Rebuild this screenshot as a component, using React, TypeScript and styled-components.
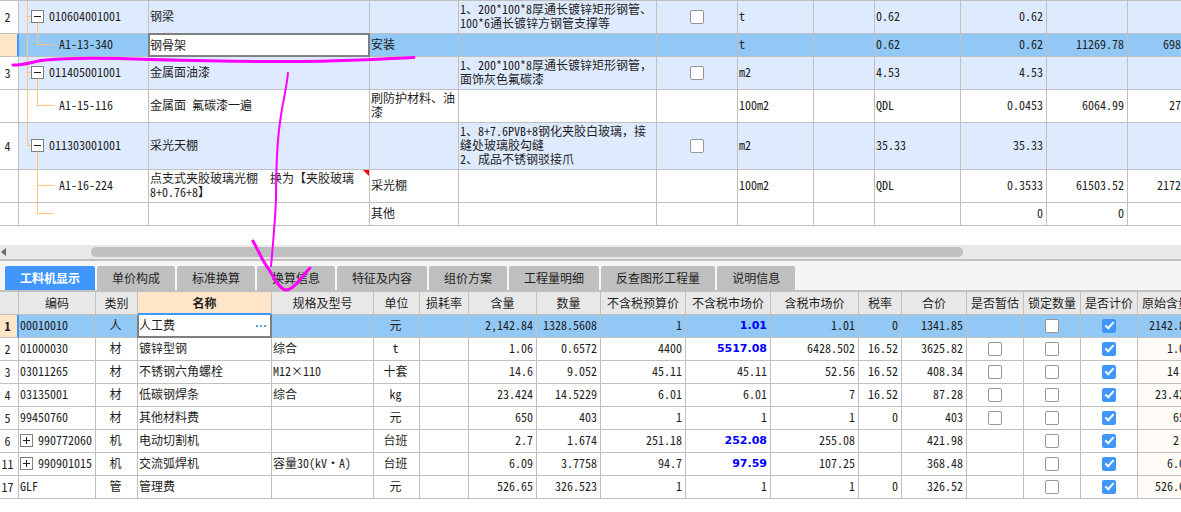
import React from 'react';
import styled, { createGlobalStyle, css } from 'styled-components';

const color = {
  line: '#c0c0c0',
  text: '#1e1e1e',
  blue: '#3f97fe',
  rowSelected: '#92c8f6',
  rowItem: '#deeafe',
  head: '#e8e8e8',
  peach: '#ffe6c8',
  guide: '#ffc480',
  editor: '#808080',
  ink: '#ff00ff',
};

const GlobalStyle = createGlobalStyle`
  *, *::before, *::after { box-sizing: border-box; }
  body {
    margin: 0;
    background: #fff;
    color: ${color.text};
    font-family: "Noto Sans CJK SC", sans-serif;
    font-size: 12px;
    line-height: 14px;
    font-feature-settings: "hwid" 1;
  }
  button, input { font: inherit; color: inherit; font-feature-settings: inherit; }
`;

const Page = styled.main`
  position: relative;
  overflow: hidden;
  min-height: 100vh;
`;

const GridPane = styled.section`
  overflow: hidden;
`;

const QuotaPane = styled(GridPane)`
  border-top: 1px solid ${color.line};
  padding-bottom: 19px;
`;

const Grid = styled.table`
  table-layout: fixed;
  width: 0;
  border-collapse: separate;
  border-spacing: 0;
`;

const Col = styled.col<{ $w: number }>`
  width: ${(p) => p.$w}px;
`;

type Align = 'left' | 'center' | 'right';

const Cell = styled.td<{ $align?: Align; $tint?: boolean }>`
  position: relative;
  padding: 0 3px 2px 1px;
  border-right: 1px solid ${color.line};
  border-bottom: 1px solid ${color.line};
  text-align: ${(p) => p.$align ?? 'left'};
  vertical-align: middle;
  ${(p) => p.$tint && css`background: #fffbf6;`}
`;

const CheckCell = styled(Cell)`
  padding: 0 0 2px;
`;

const Line = styled.div`
  white-space: nowrap;
`;

const FullWidth = styled.span`
  font-feature-settings: normal;
`;

const NumberCell = styled.th<{ $current?: boolean }>`
  padding: 0 3px 0 0;
  border-right: 1px solid ${color.line};
  border-bottom: 1px solid ${color.line};
  background: #fff;
  font-weight: 400;
  text-align: center;
  ${(p) =>
    p.$current &&
    css`
      padding-right: 2px;
      border-right: 2px solid ${color.blue};
      background: ${color.peach};
      font-weight: 700;
    `}
`;

const HeadCell = styled.th<{ $active?: boolean }>`
  height: 23px;
  padding: 0;
  border-right: 1px solid ${color.line};
  border-bottom: 1px solid ${color.line};
  background: ${color.head};
  font-weight: 400;
  text-align: center;
  white-space: nowrap;
  ${(p) =>
    p.$active &&
    css`
      border-bottom: 2px solid ${color.blue};
      background: ${color.peach};
      font-weight: 700;
    `}
`;

type RowKind = 'item' | 'selected' | 'plain';

const Row = styled.tr<{ $kind: RowKind; $h: number }>`
  height: ${(p) => p.$h}px;
  background: ${(p) =>
    p.$kind === 'item' ? color.rowItem : p.$kind === 'selected' ? color.rowSelected : '#fff'};
`;

type Guide = 'item' | 'itemEnd' | 'child' | 'lastGroupChild' | 'last';

const g = `linear-gradient(${color.guide}, ${color.guide}) no-repeat`;
const mid = 'calc(50% - 1px)';
const guides: Record<Guide, string> = {
  item: `${g} 8px 0 / 1px 100%, ${g} 8px ${mid} / 5px 1px, ${g} 18px 100% / 1px 50%`,
  itemEnd: `${g} 8px 0 / 1px 50%, ${g} 8px ${mid} / 5px 1px, ${g} 18px 100% / 1px 50%`,
  child: `${g} 8px 0 / 1px 100%, ${g} 18px 0 / 1px 50%, ${g} 18px ${mid} / 17px 1px`,
  lastGroupChild: `${g} 18px 0 / 1px 100%, ${g} 18px ${mid} / 17px 1px`,
  last: `${g} 18px 0 / 1px 50%, ${g} 18px ${mid} / 17px 1px`,
};

const TreeCell = styled(Cell)<{ $guide: Guide }>`
  padding-left: ${(p) => (p.$guide.startsWith('item') ? 12 : 40)}px;
  background: ${(p) => guides[p.$guide]};
`;

const Code = styled.div`
  display: flex;
  align-items: center;
  gap: 5px;
`;

const Toggle = styled.button`
  display: flex;
  align-items: center;
  justify-content: center;
  flex: none;
  width: 13px;
  height: 13px;
  padding: 0;
  border: 1px solid #808080;
  background: #fff;
`;

const Tick = styled.input`
  appearance: none;
  display: block;
  width: 14px;
  height: 14px;
  margin: 1px auto 0;
  border: 1px solid #969696;
  border-radius: 2px;
  background: #fff;
  &:checked {
    border-color: ${color.blue};
    background: ${color.blue};
  }
  &:checked::before {
    content: '';
    display: block;
    width: 5px;
    height: 9px;
    margin: 0 0 0 4px;
    border: solid #fff;
    border-width: 0 2px 2px 0;
    transform: rotate(42deg);
  }
`;

const Editor = styled.div<{ $underHead?: boolean }>`
  position: absolute;
  inset: ${(p) => (p.$underHead ? '0 -1px -1px' : '-1px')};
  display: flex;
  align-items: center;
  border: 2px solid ${color.editor};
  ${(p) => p.$underHead && css`border-top: 0;`}
  background: #fff;
`;

const EditorInput = styled.input`
  flex: 1;
  min-width: 0;
  height: 100%;
  padding: 0 0 2px;
  border: 0;
  outline: 0;
  background: transparent;
`;

const MoreButton = styled.button`
  display: flex;
  align-items: center;
  height: 100%;
  padding: 0 3px;
  border: 0;
  background: transparent;
`;

const Flag = styled.span`
  position: absolute;
  top: 0;
  right: 0;
  border: 3px solid transparent;
  border-top-color: #f00;
  border-right-color: #f00;
`;

const Price = styled.b`
  color: #0000ff;
  font: 700 11px/14px "DejaVu Sans", sans-serif;
`;

const ScrollBar = styled.div`
  display: flex;
  align-items: center;
  height: 14px;
  background: ${color.head};
`;

const ScrollArrow = styled.button`
  display: flex;
  align-items: center;
  width: 8px;
  height: 14px;
  padding: 0 0 0 1px;
  border: 0;
  background: transparent;
`;

const ScrollTrack = styled.div`
  flex: 1;
  padding-left: 7%;
`;

const ScrollThumb = styled.div`
  width: 80%;
  height: 10px;
  border-radius: 5px;
  background: #bfbfbf;
`;

const TabBar = styled.nav`
  display: flex;
  gap: 2px;
  padding: 5px 5px 0;
  border-top: 2px solid ${color.line};
  border-bottom: 2px solid ${color.line};
  background: #f5f5f5;
`;

const Tab = styled.button<{ $active?: boolean }>`
  height: 24px;
  padding: 0 15px;
  border: 0;
  border-radius: 2px 2px 0 0;
  white-space: nowrap;
  background: ${(p) => (p.$active ? color.blue : '#bfbfbf')};
  color: ${(p) => (p.$active ? '#fff' : color.text)};
  font-weight: ${(p) => (p.$active ? 700 : 400)};
`;

const Ink = styled.svg`
  position: absolute;
  top: 0;
  left: 0;
  pointer-events: none;
`;

/* One block per line; full-width commas and spaces keep a whole character cell. */
const Lines = ({ text = '' }: { text?: string }) => (
  <>
    {text.split('\n').map((line, n) => (
      <Line key={n}>
        {line.split(/([，　])/).map((part, i) => (i % 2 ? <FullWidth key={i}>{part}</FullWidth> : part))}
      </Line>
    ))}
  </>
);

const Sign = ({ plus }: { plus?: boolean }) => (
  <svg width="7" height="7" viewBox="0 0 7 7" shapeRendering="crispEdges" aria-hidden="true">
    <path d={plus ? 'M0 3h7v1H0zM3 0h1v7H3z' : 'M0 3h7v1H0z'} fill="#1e1e1e" />
  </svg>
);

const quotaCols = [19, 130, 221, 89, 198, 81, 76, 61, 86, 86, 81, 81];

interface QuotaRow {
  no?: string;
  kind: RowKind;
  h: number;
  guide: Guide;
  code: string;
  name: string;
  type?: string;
  feature?: string;
  check?: boolean;
  unit?: string;
  expr?: string;
  qty?: string;
  price?: string;
  total?: string;
  flag?: boolean;
}

const quotaRows: QuotaRow[] = [
  { no: '2', kind: 'item', h: 33, guide: 'item', code: '010604001001', name: '钢梁', feature: '1、200*100*8厚通长镀锌矩形钢管、\n100*6通长镀锌方钢管支撑等', check: true, unit: 't', expr: '0.62', qty: '0.62' },
  { kind: 'selected', h: 23, guide: 'child', code: 'A1-13-340', name: '钢骨架', type: '安装', unit: 't', expr: '0.62', qty: '0.62', price: '11269.78', total: '6987.26' },
  { no: '3', kind: 'item', h: 33, guide: 'item', code: '011405001001', name: '金属面油漆', feature: '1、200*100*8厚通长镀锌矩形钢管，\n面饰灰色氟碳漆', check: true, unit: 'm2', expr: '4.53', qty: '4.53' },
  { kind: 'plain', h: 33, guide: 'child', code: 'A1-15-116', name: '金属面 氟碳漆一遍', type: '刷防护材料、油漆', unit: '100m2', expr: 'QDL', qty: '0.0453', price: '6064.99', total: '274.74' },
  { no: '4', kind: 'item', h: 47, guide: 'itemEnd', code: '011303001001', name: '采光天棚', feature: '1、8+7.6PVB+8钢化夹胶白玻璃，接\n缝处玻璃胶勾缝\n2、成品不锈钢驳接爪', check: true, unit: 'm2', expr: '35.33', qty: '35.33' },
  { kind: 'plain', h: 33, guide: 'lastGroupChild', code: 'A1-16-224', name: '点支式夹胶玻璃光棚　换为【夹胶玻璃\n8+0.76+8】', type: '采光棚', unit: '100m2', expr: 'QDL', qty: '0.3533', price: '61503.52', total: '21729.19', flag: true },
  { kind: 'plain', h: 23, guide: 'last', code: '', name: '', type: '其他', qty: '0', price: '0', total: '0' },
];

const QuotaGrid = () => (
  <Grid aria-label="定额">
    <colgroup>{quotaCols.map((w, i) => <Col key={i} $w={w} />)}</colgroup>
    <tbody>
      {quotaRows.map((r, i) => (
        <Row key={i} $kind={r.kind} $h={r.h}>
          <NumberCell scope="row" $current={r.kind === 'selected'}>{r.no}</NumberCell>
          <TreeCell $guide={r.guide}>
            <Code>
              {r.kind === 'item' && <Toggle aria-label={`折叠 ${r.code}`}><Sign /></Toggle>}
              {r.code}
            </Code>
          </TreeCell>
          <Cell>
            {r.kind === 'selected' ? (
              <Editor><EditorInput aria-label="名称" defaultValue={r.name} /></Editor>
            ) : <Lines text={r.name} />}
            {r.flag && <Flag />}
          </Cell>
          <Cell>{r.type}</Cell>
          <Cell><Lines text={r.feature} /></Cell>
          <CheckCell>{r.check && <Tick type="checkbox" aria-label={`选择 ${r.code}`} />}</CheckCell>
          <Cell>{r.unit}</Cell>
          <Cell />
          <Cell>{r.expr}</Cell>
          <Cell $align="right">{r.qty}</Cell>
          <Cell $align="right">{r.price}</Cell>
          <Cell $align="right">{r.total}</Cell>
        </Row>
      ))}
    </tbody>
  </Grid>
);

const tabs = ['工料机显示', '单价构成', '标准换算', '换算信息', '特征及内容', '组价方案', '工程量明细', '反查图形工程量', '说明信息'];

const resourceCols: [string, number][] = [
  ['', 19], ['编码', 77], ['类别', 42], ['名称', 134], ['规格及型号', 102], ['单位', 46],
  ['损耗率', 49], ['含量', 68], ['数量', 64], ['不含税预算价', 85], ['不含税市场价', 85],
  ['含税市场价', 88], ['税率', 43], ['合价', 65], ['是否暂估', 57], ['锁定数量', 57],
  ['是否计价', 57], ['原始含量', 57],
];

interface Resource {
  no: string;
  code: string;
  kind: string;
  name: string;
  spec?: string;
  unit: string;
  content: string;
  qty: string;
  budget: string;
  market: string;
  changed?: boolean;
  taxed: string;
  rate?: string;
  total: string;
  estimate?: boolean;
  group?: boolean;
  original: string;
}

const resources: Resource[] = [
  { no: '1', code: '00010010', kind: '人', name: '人工费', unit: '元', content: '2,142.84', qty: '1328.5608', budget: '1', market: '1.01', changed: true, taxed: '1.01', rate: '0', total: '1341.85', original: '2142.84' },
  { no: '2', code: '01000030', kind: '材', name: '镀锌型钢', spec: '综合', unit: 't', content: '1.06', qty: '0.6572', budget: '4400', market: '5517.08', changed: true, taxed: '6428.502', rate: '16.52', total: '3625.82', estimate: true, original: '1.06' },
  { no: '3', code: '03011265', kind: '材', name: '不锈钢六角螺栓', spec: 'M12×110', unit: '十套', content: '14.6', qty: '9.052', budget: '45.11', market: '45.11', taxed: '52.56', rate: '16.52', total: '408.34', estimate: true, original: '14.6' },
  { no: '4', code: '03135001', kind: '材', name: '低碳钢焊条', spec: '综合', unit: 'kg', content: '23.424', qty: '14.5229', budget: '6.01', market: '6.01', taxed: '7', rate: '16.52', total: '87.28', estimate: true, original: '23.424' },
  { no: '5', code: '99450760', kind: '材', name: '其他材料费', unit: '元', content: '650', qty: '403', budget: '1', market: '1', taxed: '1', rate: '0', total: '403', estimate: true, original: '650' },
  { no: '6', code: '990772060', kind: '机', name: '电动切割机', unit: '台班', content: '2.7', qty: '1.674', budget: '251.18', market: '252.08', changed: true, taxed: '255.08', total: '421.98', group: true, original: '2.7' },
  { no: '11', code: '990901015', kind: '机', name: '交流弧焊机', spec: '容量30(kV·A)', unit: '台班', content: '6.09', qty: '3.7758', budget: '94.7', market: '97.59', changed: true, taxed: '107.25', total: '368.48', group: true, original: '6.09' },
  { no: '17', code: 'GLF', kind: '管', name: '管理费', unit: '元', content: '526.65', qty: '326.523', budget: '1', market: '1', taxed: '1', rate: '0', total: '326.52', original: '526.65' },
];

const ResourceGrid = () => (
  <Grid aria-label="工料机显示">
    <colgroup>{resourceCols.map(([t, w]) => <Col key={t} $w={w} />)}</colgroup>
    <thead>
      <tr>
        {resourceCols.map(([t]) => <HeadCell key={t} scope="col" $active={t === '名称'}>{t}</HeadCell>)}
      </tr>
    </thead>
    <tbody>
      {resources.map((r, i) => (
        <Row key={r.no} $kind={i === 0 ? 'selected' : 'plain'} $h={23}>
          <NumberCell scope="row" $current={i === 0}>{r.no}</NumberCell>
          <Cell>
            <Code>
              {r.group && <Toggle aria-label={`展开 ${r.code}`}><Sign plus /></Toggle>}
              {r.code}
            </Code>
          </Cell>
          <Cell $align="center">{r.kind}</Cell>
          <Cell>
            {i === 0 ? (
              <Editor $underHead>
                <EditorInput aria-label="名称" defaultValue={r.name} />
                <MoreButton aria-label="更多">
                  <svg width="11" height="2" viewBox="0 0 11 2" shapeRendering="crispEdges" aria-hidden="true">
                    <path d="M0 0h2v2H0zM4 0h2v2H4zM8 0h2v2H8z" fill="#5aa5dc" />
                  </svg>
                </MoreButton>
              </Editor>
            ) : r.name}
          </Cell>
          <Cell>{r.spec}</Cell>
          <Cell $align="center">{r.unit}</Cell>
          <Cell />
          <Cell $align="right">{r.content}</Cell>
          <Cell $align="right">{r.qty}</Cell>
          <Cell $align="right">{r.budget}</Cell>
          <Cell $align="right">{r.changed ? <Price>{r.market}</Price> : r.market}</Cell>
          <Cell $align="right">{r.taxed}</Cell>
          <Cell $align="right">{r.rate}</Cell>
          <Cell $align="right">{r.total}</Cell>
          <CheckCell>{r.estimate && <Tick type="checkbox" aria-label={`是否暂估 ${r.name}`} />}</CheckCell>
          <CheckCell><Tick type="checkbox" aria-label={`锁定数量 ${r.name}`} /></CheckCell>
          <CheckCell><Tick type="checkbox" defaultChecked aria-label={`是否计价 ${r.name}`} /></CheckCell>
          <Cell $align="right" $tint={i > 0}>{r.original}</Cell>
        </Row>
      ))}
    </tbody>
  </Grid>
);

export default function App() {
  return (
    <Page>
      <GlobalStyle />
      <QuotaPane>
        <QuotaGrid />
      </QuotaPane>
      <ScrollBar>
        <ScrollArrow aria-label="向左滚动">
          <svg width="5" height="8" viewBox="0 0 5 8" aria-hidden="true">
            <path d="M5 0v8L0 4z" fill="#6a6a6a" />
          </svg>
        </ScrollArrow>
        <ScrollTrack><ScrollThumb /></ScrollTrack>
      </ScrollBar>
      <TabBar>
        {tabs.map((t, i) => <Tab key={t} $active={i === 0}>{t}</Tab>)}
      </TabBar>
      <GridPane>
        <ResourceGrid />
      </GridPane>
      <Ink width="440" height="300" viewBox="0 0 440 300" fill="none" stroke={color.ink} strokeLinecap="round" strokeLinejoin="round" aria-hidden="true">
        <path strokeWidth="3" d="M13 65C26 65 34 61 46 60C66 58 110 58 150 59.500C210 61 250 62 300 61.500C350 61 380 59 414 57.500" />
        <path strokeWidth="2" d="M288 73C286 92 283 100 280 122C277 144 276 160 276 200C275 220 273 245 271 266" />
        <path strokeWidth="3" d="M253 241C260 254 263 262 268 268C274 278 280 290 286 290C294 290 302 276 310 268" />
      </Ink>
    </Page>
  );
}
